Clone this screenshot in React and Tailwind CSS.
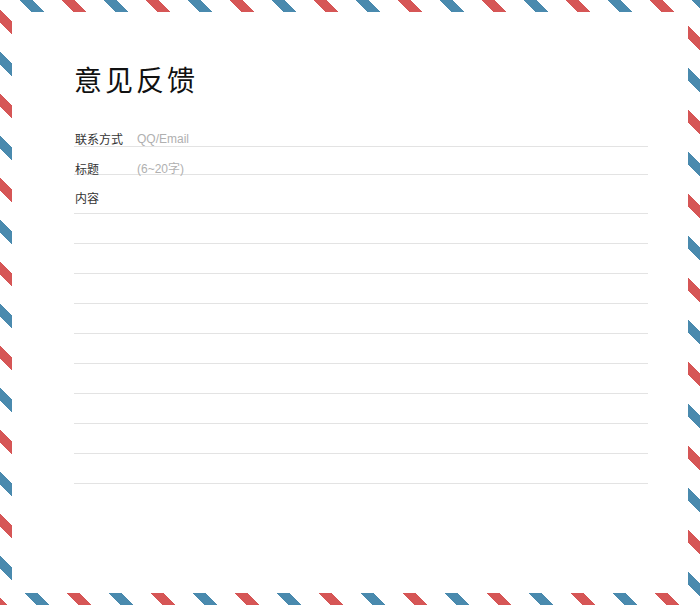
const stripes =
  "bg-[linear-gradient(45deg,transparent_11.9%,#4a8aae_11.9%_19.6%,transparent_19.6%_36.9%,#d65656_36.9%_44.6%,transparent_44.6%_61.9%,#4a8aae_61.9%_69.6%,transparent_69.6%_86.9%,#d65656_86.9%_94.6%,transparent_94.6%)] bg-[length:84px_84px]";

function Field({ label, placeholder, height, textPad }) {
  return (
    <label className={`flex items-end border-b border-[#e3e3e3] ${height}`}>
      <span className={`w-[62px] shrink-0 pl-px text-[12px] leading-[14px] text-[#333] ${textPad}`}>
        {label}
      </span>
      {placeholder && (
        <input
          type="text"
          placeholder={placeholder}
          className={`h-[14px] w-full bg-transparent pl-px text-[12px] leading-[14px] text-[#333] outline-none placeholder:text-[#b0b0b0] ${textPad}`}
          style={{ fontFamily: '"Liberation Sans", "Noto Sans CJK SC", sans-serif' }}
        />
      )}
    </label>
  );
}

export default function App() {
  return (
    <div className={`h-screen w-full bg-white p-3 ${stripes}`}>
      <div
        className="h-full bg-white pl-[62px] pr-[40px] pt-[47px]"
        style={{ fontFamily: '"Noto Sans CJK SC", "Liberation Sans", sans-serif' }}
      >
        <h1 className="text-[28px] leading-[40px] font-normal tracking-[3px] text-[#111]">意见反馈</h1>

        <div className="mt-[13px]">
          <Field label="联系方式" placeholder="QQ/Email" height="h-[35px]" textPad="" />
          <Field label="标题" placeholder="(6~20字)" height="h-[28px]" textPad="-mb-[2px]" />
          <Field label="内容" height="h-[39px]" textPad="mb-[8px]" />
          {Array.from({ length: 9 }).map((_, i) => (
            <div key={i} className="h-[30px] border-b border-[#e3e3e3]" />
          ))}
        </div>
      </div>
    </div>
  );
}
